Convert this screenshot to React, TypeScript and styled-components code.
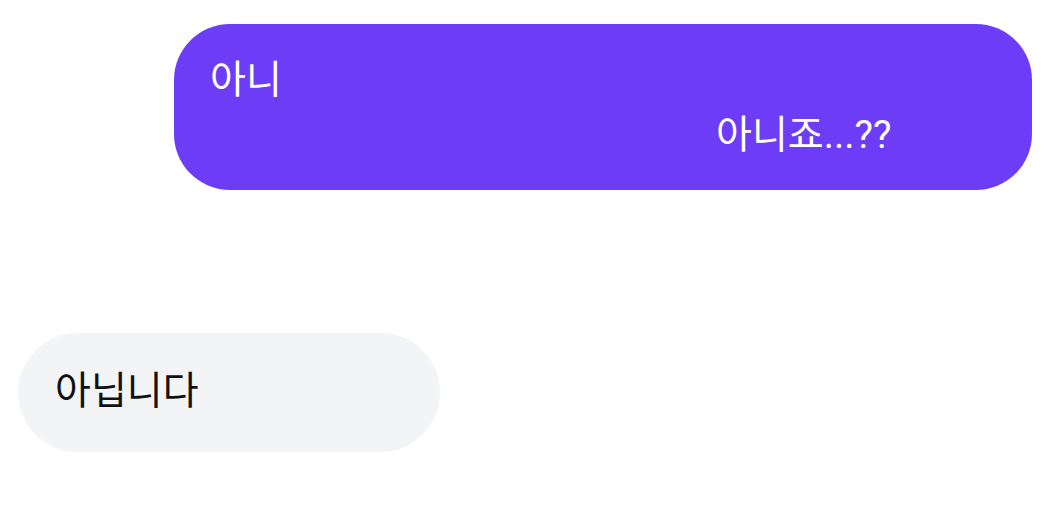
import React from "react"
import styled, { createGlobalStyle } from "styled-components"

const GlobalStyle = createGlobalStyle`
    html, body {
        margin: 0;
        padding: 0;
        background: #ffffff;
    }
    body {
        font-family: Roboto, "Noto Sans CJK KR", "Noto Sans", sans-serif;
    }
`

const Thread = styled.div`
    width: 1056px;
    height: 507px;
    box-sizing: border-box;
    padding: 24px 24px 0 18px;
    display: flex;
    flex-direction: column;
`

const Row = styled.div<{ $mine?: boolean }>`
    display: flex;
    justify-content: ${p => (p.$mine ? "flex-end" : "flex-start")};
    margin-bottom: ${p => (p.$mine ? "143px" : "0")};
`

const Bubble = styled.div<{ $mine?: boolean }>`
    box-sizing: border-box;
    display: flex;
    flex-direction: column;
    background: ${p => (p.$mine ? "#6d3cf7" : "#f3f4f6")};
    color: ${p => (p.$mine ? "#ffffff" : "#111111")};
    border-radius: ${p => (p.$mine ? "56px" : "60px")};
    font-size: 39px;
    line-height: 55px;
`

const MineBubble = styled(Bubble)`
    width: 858px;
    height: 166px;
    padding: 29px 36px 0 36px;
`

const TheirBubble = styled(Bubble)`
    width: 422px;
    height: 119px;
    padding: 31px 37px 0 37px;
`

const Line = styled.span<{ $indent?: number }>`
    display: block;
    padding-left: ${p => p.$indent ?? 0}px;
    white-space: nowrap;
`

export default function App() {
    return (
        <>
            <GlobalStyle />
            <Thread>
                <Row $mine>
                    <MineBubble $mine>
                        <Line>아니</Line>
                        <Line $indent={506}>아니죠...??</Line>
                    </MineBubble>
                </Row>
                <Row>
                    <TheirBubble>
                        <Line>아닙니다</Line>
                    </TheirBubble>
                </Row>
            </Thread>
        </>
    )
}
